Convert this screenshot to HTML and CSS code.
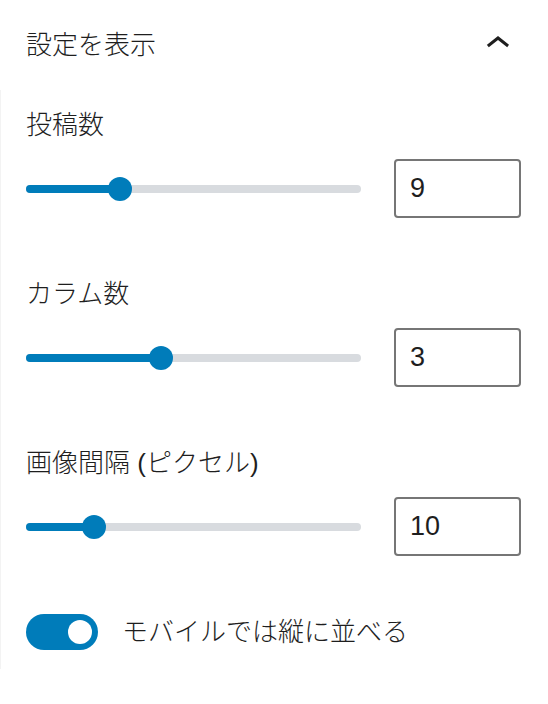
FILE: index.html
```html
<!DOCTYPE html>
<html lang="ja">
<head>
    <meta charset="UTF-8">
    <title>設定を表示</title>
    <link rel="stylesheet" href="styles.css">
</head>
<body>
    <!-- Settings Panel -->
    <div class="panel">
        <div class="panel-header">
            <h2 class="panel-title">設定を表示</h2>
            <svg class="chevron" viewBox="0 0 24 24" width="48" height="48" aria-hidden="true">
                <path d="M6.5 12.4L12 8l5.5 4.4-.9 1.2L12 10l-4.6 3.6-1-1.2z"/>
            </svg>
        </div>

        <div class="panel-body">
            <!-- Posts -->
            <div class="control">
                <label class="control-label">投稿数</label>
                <div class="range-row">
                    <div class="range-track">
                        <div class="range-fill" style="width: 28.1%"></div>
                        <span class="range-thumb"></span>
                    </div>
                    <input class="range-number" type="text" value="9">
                </div>
            </div>

            <!-- Columns -->
            <div class="control">
                <label class="control-label">カラム数</label>
                <div class="range-row">
                    <div class="range-track">
                        <div class="range-fill" style="width: 40.3%"></div>
                        <span class="range-thumb"></span>
                    </div>
                    <input class="range-number" type="text" value="3">
                </div>
            </div>

            <!-- Gap -->
            <div class="control">
                <label class="control-label">画像間隔 (ピクセル)</label>
                <div class="range-row">
                    <div class="range-track">
                        <div class="range-fill" style="width: 20.3%"></div>
                        <span class="range-thumb"></span>
                    </div>
                    <input class="range-number" type="text" value="10">
                </div>
            </div>

            <!-- Toggle -->
            <div class="toggle-row">
                <span class="toggle is-checked"><span class="toggle-knob"></span></span>
                <span class="toggle-label">モバイルでは縦に並べる</span>
            </div>
        </div>
    </div>
</body>
</html>
```

FILE: styles.css
```css
/* General Body Styling */
body {
    margin: 0;
    padding: 0;
    background: #fff;
    color: #1e1e1e;
    font-family: "Liberation Sans", "Noto Sans CJK JP", sans-serif;
    font-weight: 300;
}

/* Panel Header */
.panel-header {
    display: flex;
    align-items: center;
    justify-content: space-between;
    height: 90px;
    padding: 0 26px;
    box-sizing: border-box;
}

.panel-title {
    margin: 0;
    font-size: 26px;
    font-weight: 300;
    line-height: 36px;
}

.chevron {
    fill: #1e1e1e;
    margin-top: -2px;
}

/* Panel Body */
.panel-body {
    padding: 17px 27px 19px 25px;
    border-left: 1px solid #f3f3f3;
}

/* Range Controls */
.control {
    margin-bottom: 58px;
}

.control-label {
    display: block;
    font-size: 26px;
    line-height: 36px;
    margin-bottom: 16px;
}

.range-row {
    display: flex;
    align-items: center;
    gap: 33px;
    height: 59px;
}

.range-track {
    flex: 1;
    display: flex;
    align-items: center;
    height: 8px;
    background: #d8dbdf;
    border-radius: 4px;
}

.range-fill {
    height: 8px;
    background: #007cba;
    border-radius: 4px 0 0 4px;
}

.range-thumb {
    flex-shrink: 0;
    width: 24px;
    height: 24px;
    margin-left: -12px;
    background: #007cba;
    border-radius: 50%;
}

.range-number {
    width: 127px;
    height: 59px;
    box-sizing: border-box;
    padding: 0 14px;
    border: 2px solid #767676;
    border-radius: 4px;
    font-family: "Liberation Sans", sans-serif;
    font-size: 27px;
    color: #1e1e1e;
    background: #fff;
}

/* Toggle */
.toggle-row {
    display: flex;
    align-items: center;
    gap: 24px;
}

.toggle {
    display: flex;
    align-items: center;
    justify-content: flex-end;
    width: 72px;
    height: 36px;
    box-sizing: border-box;
    padding: 0 6px;
    border-radius: 18px;
    background: #007cba;
}

.toggle-knob {
    width: 24px;
    height: 24px;
    border-radius: 50%;
    background: #fff;
}

.toggle-label {
    font-size: 26px;
    line-height: 36px;
}
```
